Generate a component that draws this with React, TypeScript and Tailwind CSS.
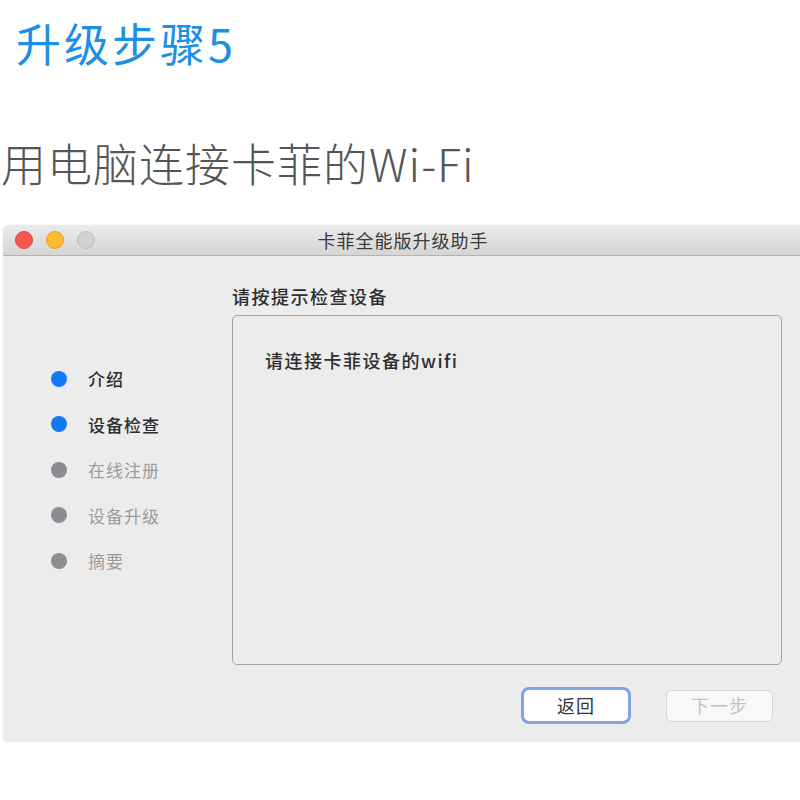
import React from "react";

const CJK = { fontFamily: '"Noto Sans CJK SC", "Noto Sans", sans-serif' };

const steps = [
  { label: "介绍", active: true },
  { label: "设备检查", active: true },
  { label: "在线注册", active: false },
  { label: "设备升级", active: false },
  { label: "摘要", active: false },
];

export default function App() {
  return (
    <div className="w-[800px] h-[800px] bg-white overflow-hidden flex flex-col" style={CJK}>
      <div className="pt-[17px] pl-[16px]">
        <h1 className="text-[45px] leading-[52px] text-[#1d8fe5] font-normal tracking-[3px]">升级步骤5</h1>
      </div>
      <div className="pt-[66px] pl-[1px]">
        <p className="text-[45px] leading-[56px] text-[#555555] font-light tracking-[1px]">用电脑连接卡菲的Wi-Fi</p>
      </div>
      <div className="mt-[34px] ml-[3px] w-[805px] rounded-[6px] overflow-hidden bg-[#ececec] flex flex-col shadow-[0_0_1px_rgba(0,0,0,0.25)]">
        <div className="relative h-[31px] flex items-center bg-gradient-to-b from-[#ebebeb] to-[#d5d5d5] border-b border-[#b4b4b4]">
          <div className="flex items-center gap-[13px] pl-[12px]">
            <span className="w-[18px] h-[18px] rounded-full bg-[#fc5652] border border-[#e2463f]" />
            <span className="w-[18px] h-[18px] rounded-full bg-[#fdbc2e] border border-[#e0a126]" />
            <span className="w-[18px] h-[18px] rounded-full bg-[#d2d2d2] border border-[#bdbdbd]" />
          </div>
          <div className="absolute inset-0 flex items-center justify-center pr-[5px]">
            <span className="text-[18px] text-[#3a3a3a] tracking-[1px]">卡菲全能版升级助手</span>
          </div>
        </div>
        <div className="h-[486px] flex">
          <div className="w-[229px] pl-[48px] pt-[100px] flex flex-col">
            {steps.map((s) => (
              <div key={s.label} className="h-[45.5px] flex items-center gap-[21px]">
                <span
                  className={
                    "w-[16px] h-[16px] rounded-full " +
                    (s.active ? "bg-[#1479f2]" : "bg-[#8c8c92]")
                  }
                />
                <span
                  className={
                    "text-[17px] tracking-[1px] " +
                    (s.active ? "text-[#2e2e2e] font-medium" : "text-[#9c9c9c]")
                  }
                >
                  {s.label}
                </span>
              </div>
            ))}
          </div>
          <div className="flex-1 pr-[26px] pt-[29px] flex flex-col">
            <div className="text-[18px] leading-[22px] text-[#2e2e2e] tracking-[1.5px] font-medium">请按提示检查设备</div>
            <div className="mt-[8px] h-[350px] rounded-[5px] border border-[#a3a3a3] bg-[#ececec] pl-[32px] pt-[31px]">
              <div className="text-[18px] leading-[26px] text-[#2e2e2e] tracking-[1.5px] font-medium">请连接卡菲设备的wifi</div>
            </div>
            <div className="mt-[22px] flex justify-end items-center gap-[35px] pr-[9px]">
              <button className="w-[110px] h-[37px] rounded-[8px] border-[3px] border-[#7ea4e6] bg-white flex items-center justify-center text-[18px] text-[#333333] tracking-[1px]">
                返回
              </button>
              <button className="w-[107px] h-[32px] rounded-[6px] border border-[#d6d6d6] bg-[#f8f8f8] flex items-center justify-center text-[18px] text-[#c2c2c2] tracking-[1px]">
                下一步
              </button>
            </div>
          </div>
        </div>
      </div>
    </div>
  );
}
